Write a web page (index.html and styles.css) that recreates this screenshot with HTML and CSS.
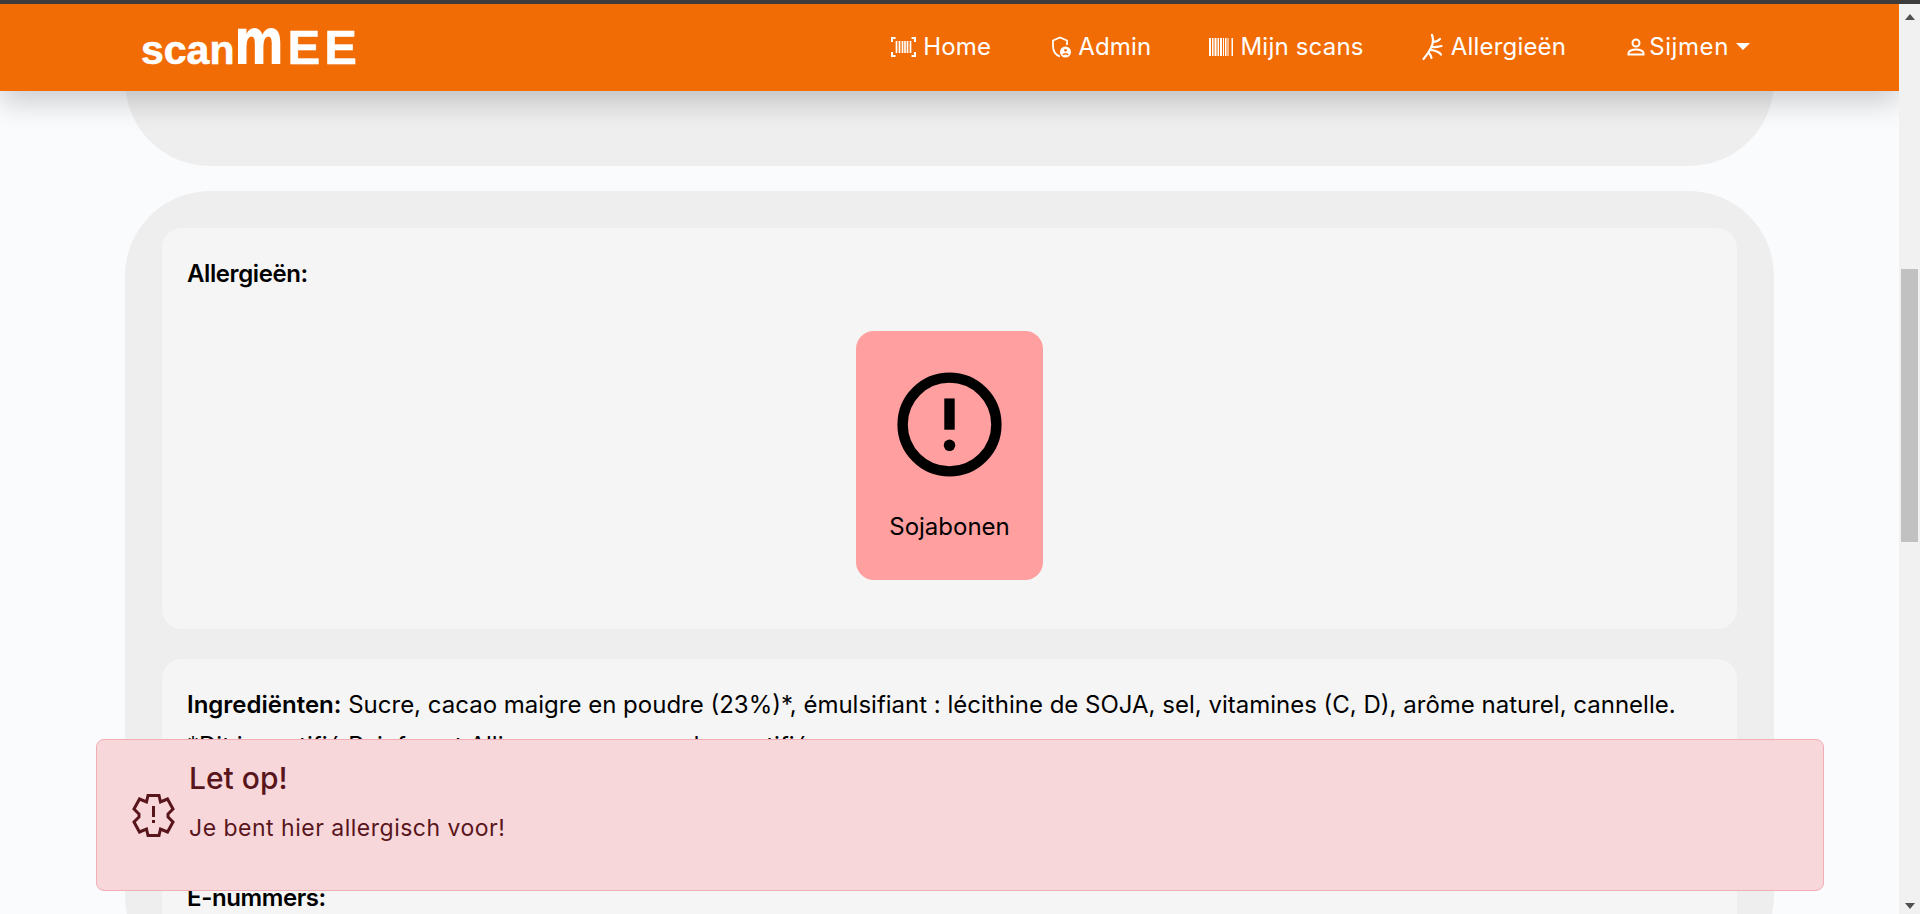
FILE: index.html
```html
<!DOCTYPE html>
<html>

<head>
    <title>scanMEE</title>
    <meta charset="utf-8">
    <meta name="viewport" content="width=device-width, initial-scale=1.0">
    <link rel="stylesheet" href="styles.css">
</head>

<body>
    <div class="topstreep"></div>
    <div class="venster">
        <div class="pagina">
            <header class="kop">
                <a class="logo" href="#"><span class="logo-scan">scan</span><span class="logo-m">m</span><span class="logo-ee">EE</span></a>
                <nav class="menu">
                    <a class="menu-item" href="#">
                        <svg class="ico" width="25" height="20" viewBox="0 0 25 20" fill="none" stroke="#fff" stroke-width="2">
                            <path d="M1 5V1h3.500M20.500 1H24v4M24 15v4h-3.500M4.500 19H1v-4"/>
                            <path d="M5.500 4v12M8.500 4v12M11.500 4v12M14 4v12M16.500 4v12M19.500 4v12" stroke-width="1.700"/>
                        </svg>
                        Home
                    </a>
                    <a class="menu-item item-admin" href="#">
                        <svg class="ico" width="19" height="22" viewBox="0 0 19 22" fill="none" stroke="#fff" stroke-width="1.800">
                            <path d="M8 20.500C3.500 19 1 15 1 10V4.500L8 1.500L15 4.500V9"/>
                            <circle cx="13.500" cy="16" r="5.500" fill="#fff" stroke="none"/>
                            <circle cx="13.500" cy="14.300" r="1.400" fill="#f26c05" stroke="none"/>
                            <path d="M11 19c.5-1.800 4.500-1.800 5 0" stroke="#f26c05" stroke-width="1.500"/>
                        </svg>
                        Admin
                    </a>
                    <a class="menu-item" href="#">
                        <svg class="ico" width="24" height="18" viewBox="0 0 24 18" fill="#fff">
                            <path d="M0 0h2v18H0zM3 0h1.500v18H3zM5.500 0h2v18h-2zM8.500 0h1.500v18H8.500zM11 0h2v18h-2zM14 0h1v18h-1zM16 0h1.500v18H16zM18.500 0h1v18h-1zM20.500 0h3.500v18h-1.500V0z"/>
                        </svg>
                        Mijn scans
                    </a>
                    <a class="menu-item" href="#">
                        <svg class="ico" width="22" height="28" viewBox="0 0 22 28" fill="none" stroke="#fff" stroke-width="2.200" stroke-linecap="round">
                            <path d="M10 2c2 5 1 9-1 13-2 4-4 7-7.500 11"/>
                            <path d="M11 9c2 0 5-1 7-3M9.500 14c3 .5 6 0 10-1M8 17c3 0 6 1 8 2 1 .5 2 1 3 2.500M7 20c1 1 2 3 2.500 5"/>
                        </svg>
                        Allergieën
                    </a>
                    <a class="menu-item item-user" href="#">
                        <svg class="ico" width="18" height="18" viewBox="0 0 18 18" fill="none" stroke="#fff" stroke-width="2">
                            <circle cx="9" cy="5" r="3.500"/>
                            <path d="M1.500 16.500v-1.500c0-2 3.500-3.500 7.500-3.500s7.500 1.500 7.500 3.500v1.500z"/>
                        </svg>
                        Sijmen
                        <span class="pijl"></span>
                    </a>
                </nav>
            </header>

            <div class="inhoud">
                <section class="kaart kaart-boven"></section>
                <section class="kaart">
                    <div class="paneel paneel-allergie">
                        <p class="titel">Allergieën:</p>
                        <div class="allergie-rij">
                            <div class="allergie">
                                <svg width="125" height="125" viewBox="0 0 24 24" fill="none" stroke="#000" stroke-width="2">
                                    <circle cx="12" cy="12" r="9"/>
                                    <rect x="11" y="7" width="2" height="6" fill="#000" stroke="none"/>
                                    <circle cx="12" cy="16" r="1.100" fill="#000" stroke="none"/>
                                </svg>
                                <span>Sojabonen</span>
                            </div>
                        </div>
                    </div>
                    <div class="paneel paneel-tekst">
                        <p class="regel"><b>Ingrediënten:</b> Sucre, cacao maigre en poudre (23%)*, émulsifiant : lécithine de SOJA, sel, vitamines (C, D), arôme naturel, cannelle.</p>
                        <p>*Dit is certifié Rainforest Alliance cacao poeder certifié</p>
                        <p class="titel titel-nummers">E-nummers:</p>
                    </div>
                </section>
            </div>

            <div class="melding">
                <svg class="melding-ico" width="43" height="43" viewBox="0 0 43 43" fill="none" stroke="#58151c" stroke-width="3" stroke-linejoin="miter">
                    <path d="M16 1.500h11l1.500 6.500 7-3 5.500 10-5 5v3l5 5-5.500 10-7-3-1.500 6.500H16l-1.500-6.500-7 3L2 28l5-5v-3l-5-5 5.500-10 7 3z"/>
                    <path d="M21.500 12v11M21.500 26v3"/>
                </svg>
                <div class="melding-tekst">
                    <h4>Let op!</h4>
                    <p>Je bent hier allergisch voor!</p>
                </div>
            </div>
        </div>

        <div class="scrollbalk">
            <span class="pijl-op"></span>
            <div class="duim"></div>
            <span class="pijl-neer"></span>
        </div>
    </div>
</body></html>
```

FILE: styles.css
```css
* {
    box-sizing: border-box;
}

html,
body {
    height: 100%;
    margin: 0;
    overflow: hidden;
}

body {
    display: flex;
    flex-direction: column;
    background: #fafbfd;
    font-family: "Inter", sans-serif;
    color: #000;
}

.topstreep {
    height: 4px;
    background: #3c3c3c;
}

.venster {
    flex: 1;
    display: flex;
    min-height: 0;
}

.pagina {
    flex: 1;
    position: relative;
    overflow: hidden;
}

.kop {
    position: relative;
    z-index: 5;
    height: 87px;
    padding: 0 149px 2px 141px;
    display: flex;
    align-items: center;
    justify-content: space-between;
    background: #f26c05;
    box-shadow: 0 10px 30px rgba(0, 0, 0, .2);
}

.logo {
    display: flex;
    align-items: baseline;
    color: #fff;
    text-decoration: none;
    font-family: "Liberation Sans", sans-serif;
    font-weight: bold;
}

.logo-scan {
    font-size: 41px;
    -webkit-text-stroke: .6px #fff;
}

.logo-m {
    display: inline-block;
    width: 53px;
    font-family: "DejaVu Sans", sans-serif;
    font-size: 64px;
    line-height: 40px;
    transform: scaleX(.75);
    transform-origin: left bottom;
}

.logo-ee {
    font-size: 49px;
    letter-spacing: 4px;
    -webkit-text-stroke: .5px #fff;
}

.menu {
    display: flex;
    align-items: center;
    gap: 58px;
}

.menu-item {
    display: flex;
    align-items: center;
    gap: 7px;
    color: #fff;
    text-decoration: none;
    font-size: 24px;
    letter-spacing: .2px;
}

.item-admin {
    margin-left: 3px;
}

.item-user {
    margin-left: 3px;
    gap: 4px;
    letter-spacing: .6px;
}

.pijl {
    width: 0;
    height: 0;
    margin-left: 3px;
    border-top: 7px solid #fff;
    border-left: 7px solid transparent;
    border-right: 7px solid transparent;
}

.inhoud {
    padding: 0 125px;
    margin-top: -87px;
}

.kaart {
    width: 1649px;
    padding: 37px;
    margin-bottom: 25px;
    background: #eee;
    border-radius: 85px;
}

.kaart-boven {
    height: 162px;
    border-radius: 0 0 85px 85px;
}

.paneel {
    padding: 28px 25px;
    background: #f5f5f5;
    border-radius: 20px;
}

.paneel p {
    margin: 0;
    font-size: 24px;
    line-height: 36px;
}

.paneel b,
.paneel .titel {
    font-weight: 600;
}

.paneel .titel {
    letter-spacing: -.4px;
}

.paneel .regel {
    margin-bottom: 5px;
}

.paneel-allergie {
    height: 401px;
    margin-bottom: 30px;
}

.allergie-rij {
    display: flex;
    justify-content: center;
    margin-top: 39px;
}

.allergie {
    width: 187px;
    height: 249px;
    padding-top: 31px;
    display: flex;
    flex-direction: column;
    align-items: center;
    background: #ff9f9f;
    border-radius: 18px;
    font-size: 24px;
}

.allergie span {
    margin-top: 25px;
}

.paneel .titel-nummers {
    margin-top: 116px;
}

.melding {
    position: absolute;
    z-index: 6;
    left: 96px;
    top: 735px;
    width: 1728px;
    height: 152px;
    padding: 0 35px;
    display: flex;
    align-items: center;
    gap: 14px;
    background: #f8d7da;
    border: 1px solid #f1aeb5;
    border-radius: 8px;
    color: #58151c;
}

.melding-ico {
    flex: none;
}

.melding-tekst {
    padding-bottom: 28px;
}

.melding h4 {
    margin: 0 0 18px;
    font-size: 30px;
    font-weight: 500;
}

.melding p {
    margin: 0;
    font-size: 23px;
    letter-spacing: .5px;
}

.scrollbalk {
    position: relative;
    width: 21px;
    background: #f1f1f1;
}

.duim {
    position: absolute;
    left: 2px;
    right: 2px;
    top: 265px;
    height: 273px;
    background: #c1c1c1;
}

.pijl-op,
.pijl-neer {
    position: absolute;
    left: 6px;
    width: 0;
    height: 0;
    border-left: 5px solid transparent;
    border-right: 5px solid transparent;
}

.pijl-op {
    top: 10px;
    border-bottom: 6px solid #505050;
}

.pijl-neer {
    bottom: 5px;
    border-top: 6px solid #505050;
}
```
